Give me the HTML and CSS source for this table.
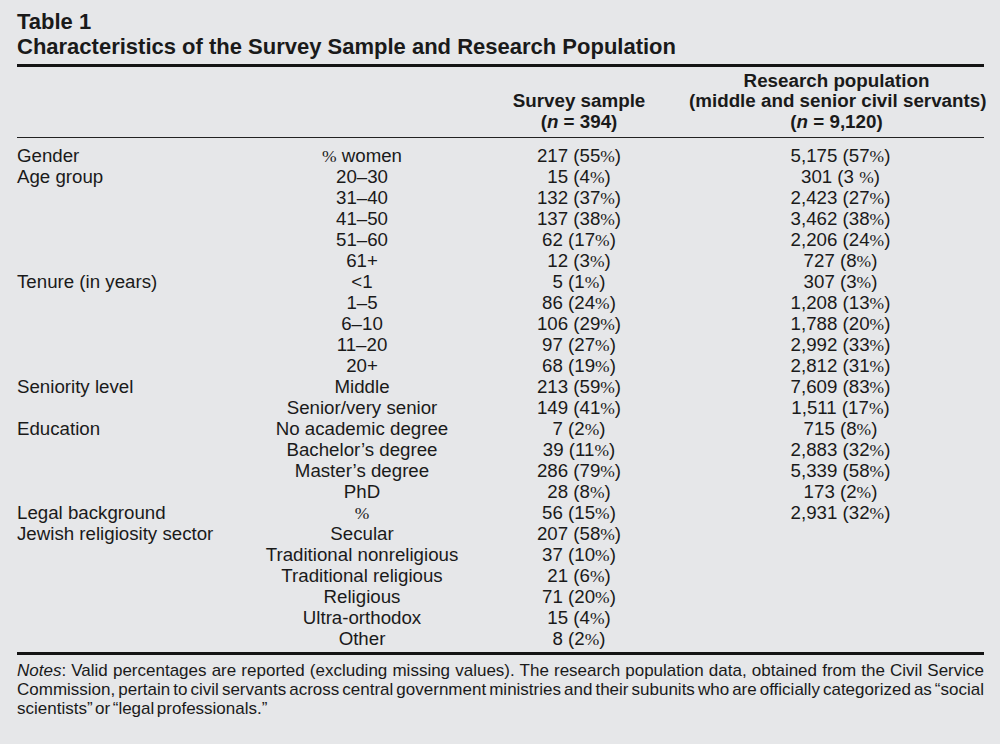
FILE: index.html
```html
<!DOCTYPE html>
<html>
<head>
<meta charset="utf-8">
<link rel="stylesheet" href="styles.css">
</head>
<body>
<div class="page">
  <div class="caption">
    <div class="cap-line">Table 1</div>
    <div class="cap-line">Characteristics of the Survey Sample and Research Population</div>
  </div>
  <table class="tbl">
    <colgroup>
      <col class="c1"><col class="c2"><col class="c3"><col class="c4">
    </colgroup>
    <thead>
      <tr>
        <th></th>
        <th></th>
        <th class="h3">Survey sample<br>(<i>n</i> = 394)</th>
        <th class="h4">Research population<br>(middle and senior civil servants)<br>(<i>n</i> = 9,120)</th>
      </tr>
    </thead>
    <tbody>
      <tr class="first"><td>Gender</td><td class="sub"><span class="pc">%</span> women</td><td class="v3">217 (55<span class="pc">%</span>)</td><td class="v4">5,175 (57<span class="pc">%</span>)</td></tr>
      <tr><td>Age group</td><td class="sub">20–30</td><td class="v3">15 (4<span class="pc">%</span>)</td><td class="v4">301 (3 <span class="pc">%</span>)</td></tr>
      <tr><td></td><td class="sub">31–40</td><td class="v3">132 (37<span class="pc">%</span>)</td><td class="v4">2,423 (27<span class="pc">%</span>)</td></tr>
      <tr><td></td><td class="sub">41–50</td><td class="v3">137 (38<span class="pc">%</span>)</td><td class="v4">3,462 (38<span class="pc">%</span>)</td></tr>
      <tr><td></td><td class="sub">51–60</td><td class="v3">62 (17<span class="pc">%</span>)</td><td class="v4">2,206 (24<span class="pc">%</span>)</td></tr>
      <tr><td></td><td class="sub">61+</td><td class="v3">12 (3<span class="pc">%</span>)</td><td class="v4">727 (8<span class="pc">%</span>)</td></tr>
      <tr><td>Tenure (in years)</td><td class="sub">&lt;1</td><td class="v3">5 (1<span class="pc">%</span>)</td><td class="v4">307 (3<span class="pc">%</span>)</td></tr>
      <tr><td></td><td class="sub">1–5</td><td class="v3">86 (24<span class="pc">%</span>)</td><td class="v4">1,208 (13<span class="pc">%</span>)</td></tr>
      <tr><td></td><td class="sub">6–10</td><td class="v3">106 (29<span class="pc">%</span>)</td><td class="v4">1,788 (20<span class="pc">%</span>)</td></tr>
      <tr><td></td><td class="sub">11–20</td><td class="v3">97 (27<span class="pc">%</span>)</td><td class="v4">2,992 (33<span class="pc">%</span>)</td></tr>
      <tr><td></td><td class="sub">20+</td><td class="v3">68 (19<span class="pc">%</span>)</td><td class="v4">2,812 (31<span class="pc">%</span>)</td></tr>
      <tr><td>Seniority level</td><td class="sub">Middle</td><td class="v3">213 (59<span class="pc">%</span>)</td><td class="v4">7,609 (83<span class="pc">%</span>)</td></tr>
      <tr><td></td><td class="sub">Senior/very senior</td><td class="v3">149 (41<span class="pc">%</span>)</td><td class="v4">1,511 (17<span class="pc">%</span>)</td></tr>
      <tr><td>Education</td><td class="sub">No academic degree</td><td class="v3">7 (2<span class="pc">%</span>)</td><td class="v4">715 (8<span class="pc">%</span>)</td></tr>
      <tr><td></td><td class="sub">Bachelor’s degree</td><td class="v3">39 (11<span class="pc">%</span>)</td><td class="v4">2,883 (32<span class="pc">%</span>)</td></tr>
      <tr><td></td><td class="sub">Master’s degree</td><td class="v3">286 (79<span class="pc">%</span>)</td><td class="v4">5,339 (58<span class="pc">%</span>)</td></tr>
      <tr><td></td><td class="sub">PhD</td><td class="v3">28 (8<span class="pc">%</span>)</td><td class="v4">173 (2<span class="pc">%</span>)</td></tr>
      <tr><td>Legal background</td><td class="sub"><span class="pc">%</span></td><td class="v3">56 (15<span class="pc">%</span>)</td><td class="v4">2,931 (32<span class="pc">%</span>)</td></tr>
      <tr><td>Jewish religiosity sector</td><td class="sub">Secular</td><td class="v3">207 (58<span class="pc">%</span>)</td><td class="v4"></td></tr>
      <tr><td></td><td class="sub">Traditional nonreligious</td><td class="v3">37 (10<span class="pc">%</span>)</td><td class="v4"></td></tr>
      <tr><td></td><td class="sub">Traditional religious</td><td class="v3">21 (6<span class="pc">%</span>)</td><td class="v4"></td></tr>
      <tr><td></td><td class="sub">Religious</td><td class="v3">71 (20<span class="pc">%</span>)</td><td class="v4"></td></tr>
      <tr><td></td><td class="sub">Ultra-orthodox</td><td class="v3">15 (4<span class="pc">%</span>)</td><td class="v4"></td></tr>
      <tr class="last"><td></td><td class="sub">Other</td><td class="v3">8 (2<span class="pc">%</span>)</td><td class="v4"></td></tr>
    </tbody>
  </table>
  <p class="notes"><i>Notes</i>: Valid percentages are reported (excluding missing values). The research population data, obtained from the Civil Service Commission, pertain to civil servants across central government ministries and their subunits who are officially categorized as “social scientists” or “legal professionals.”</p>
</div>
</body>
</html>
```

FILE: styles.css
```css
html, body {
  margin: 0;
  padding: 0;
  background: #e6e7e9;
}
body {
  font-family: "Liberation Sans", Arial, sans-serif;
  color: #1a1a1a;
}
.page {
  width: 967px;
  margin-left: 17px;
  padding-top: 10px;
}
.caption {
  font-weight: bold;
  font-size: 22px;
  line-height: 24.5px;
  padding-bottom: 5px;
  border-bottom: 3px solid #141414;
}
.tbl {
  width: 967px;
  border-collapse: collapse;
  table-layout: fixed;
  font-size: 18.7px;
  line-height: 21px;
}
.c1 { width: 230px; }
.c2 { width: 230px; }
.c3 { width: 204px; }
.c4 { width: 303px; }
.tbl th, .tbl td {
  padding: 0;
  font-weight: normal;
  vertical-align: top;
}
.tbl thead th {
  font-weight: bold;
  font-size: 18.8px;
  line-height: 20.5px;
  padding-top: 3.5px;
  padding-bottom: 5px;
  text-align: center;
  vertical-align: bottom;
  border-bottom: 1.3px solid #222;
  white-space: nowrap;
}
.tbl thead th.h4 {
  padding-left: 8px;
}
.tbl td { text-align: left; white-space: nowrap; height: 21px; }
.tbl td.sub, .tbl td.v3, .tbl td.v4 { text-align: center; }
.tbl td.v4 { padding-left: 16px; }
.tbl tr.first td { padding-top: 7px; }
.tbl tr.last td { padding-bottom: 3px; border-bottom: 3px solid #141414; }
.pc {
  font-family: "Liberation Serif", "Times New Roman", serif;
  font-size: 17.5px;
  line-height: 1;
}
.notes {
  margin: 6px 0 0 0;
  font-size: 17px;
  line-height: 19px;
  word-spacing: -2.2px;
  text-align: justify;
}
```
